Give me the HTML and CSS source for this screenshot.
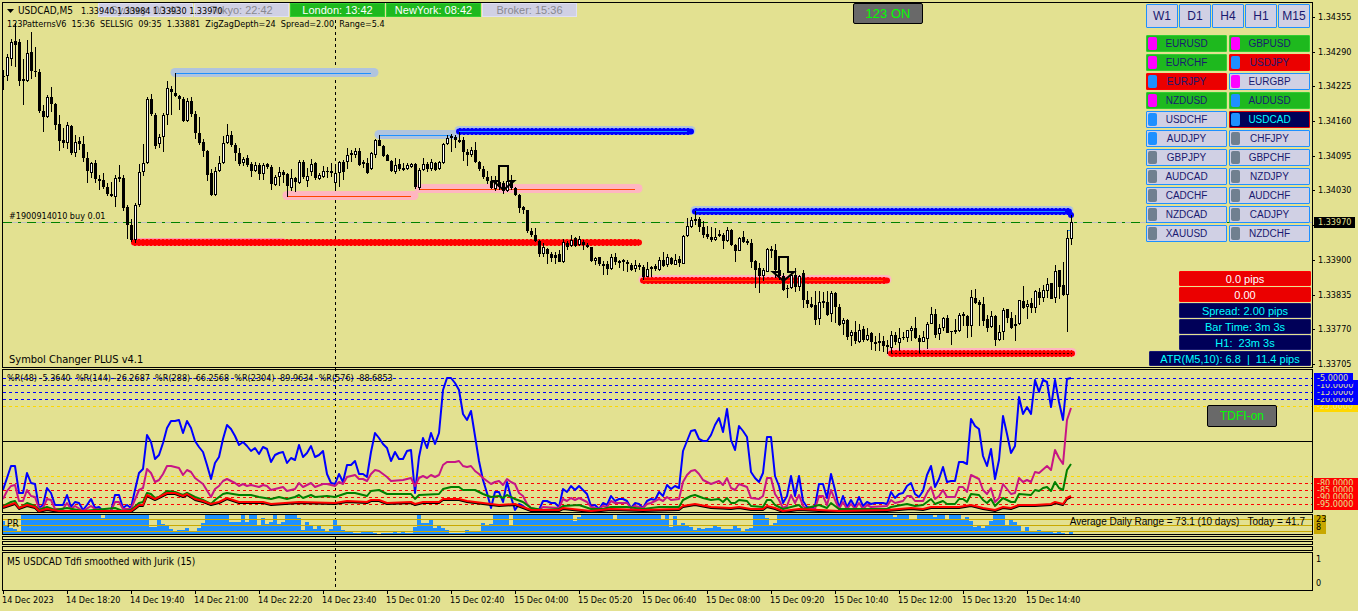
FILE: index.html
```html
<!DOCTYPE html>
<html lang="en">
<head>
<meta charset="utf-8">
<title>USDCAD,M5</title>
<link rel="stylesheet" href="styles.css">
</head>
<body>
<main class="terminal">
  <div class="day-line"></div>

  <section class="pane pane-price">
    <svg class="plot plot-price" id="price"></svg>
    <ul class="sessions">
      <li class="session">Sydney: 00:42</li>
      <li class="session">Tokyo: 22:42</li>
      <li class="session open">London: 13:42</li>
      <li class="session open">NewYork: 08:42</li>
      <li class="session">Broker: 15:36</li>
    </ul>
    <header class="title">
      <svg class="caret" viewBox="0 0 7 4"><path d="M0 0h7L3.500 4z"/></svg>
      <h1 class="symbol">USDCAD,M5</h1>
      <span class="quote">1.33940 1.33984 1.33930 1.33970</span>
    </header>
    <p class="subtitle">123PatternsV6&nbsp; 15:36&nbsp; SELLSIG&nbsp; 09:35&nbsp; 1.33881&nbsp; ZigZagDepth=24&nbsp; Spread=2.00&nbsp; Range=5.4</p>
    <button class="toggle toggle-patterns" type="button">123 ON</button>
    <p class="order">#1900914010 buy 0.01</p>
    <p class="watermark">Symbol Changer PLUS v4.1</p>

    <div class="switcher">
      <div class="frames">
        <button type="button">W1</button><button type="button">D1</button><button type="button">H4</button><button type="button">H1</button><button type="button">M15</button>
      </div>
      <div class="pairs">
        <button type="button" class="pair up"><i class="chip hot"></i>EURUSD</button>
        <button type="button" class="pair up"><i class="chip hot"></i>GBPUSD</button>
        <button type="button" class="pair up"><i class="chip hot"></i>EURCHF</button>
        <button type="button" class="pair down"><i class="chip cool"></i>USDJPY</button>
        <button type="button" class="pair down"><i class="chip cool"></i>EURJPY</button>
        <button type="button" class="pair"><i class="chip hot"></i>EURGBP</button>
        <button type="button" class="pair up"><i class="chip hot"></i>NZDUSD</button>
        <button type="button" class="pair up"><i class="chip cool"></i>AUDUSD</button>
        <button type="button" class="pair"><i class="chip cool"></i>USDCHF</button>
        <button type="button" class="pair current"><i class="chip cool"></i>USDCAD</button>
        <button type="button" class="pair"><i class="chip cool"></i>AUDJPY</button>
        <button type="button" class="pair"><i class="chip"></i>CHFJPY</button>
        <button type="button" class="pair"><i class="chip"></i>GBPJPY</button>
        <button type="button" class="pair"><i class="chip"></i>GBPCHF</button>
        <button type="button" class="pair"><i class="chip"></i>AUDCAD</button>
        <button type="button" class="pair"><i class="chip"></i>NZDJPY</button>
        <button type="button" class="pair"><i class="chip"></i>CADCHF</button>
        <button type="button" class="pair"><i class="chip"></i>AUDCHF</button>
        <button type="button" class="pair"><i class="chip"></i>NZDCAD</button>
        <button type="button" class="pair"><i class="chip"></i>CADJPY</button>
        <button type="button" class="pair"><i class="chip"></i>XAUUSD</button>
        <button type="button" class="pair"><i class="chip"></i>NZDCHF</button>
      </div>
    </div>

    <ul class="stats">
      <li class="stat loss">0.0 pips</li>
      <li class="stat loss">0.00</li>
      <li class="stat">Spread: 2.00 pips</li>
      <li class="stat">Bar Time: 3m 3s</li>
      <li class="stat">H1:&nbsp; 23m 3s</li>
      <li class="stat wide">ATR(M5,10): 6.8&nbsp; |&nbsp; 11.4 pips</li>
    </ul>
  </section>
  <aside class="axis axis-price">
    <ul class="prices">
      <li>1.34355</li><li>1.34290</li><li>1.34225</li><li>1.34160</li><li>1.34095</li><li>1.34030</li>
      <li>1.33965</li><li>1.33900</li><li>1.33835</li><li>1.33770</li><li>1.33705</li>
    </ul>
    <span class="bid">1.33970</span>
  </aside>

  <section class="pane">
    <svg class="plot plot-range" id="range"></svg>
    <p class="legend">%R(48) -5.3640&nbsp; %R(144) -26.2687&nbsp; %R(288) -66.2568&nbsp; %R(2304) -89.9634&nbsp; %R(576) -88.6853</p>
    <button class="toggle toggle-tdfi" type="button">TDFI-on</button>
  </section>
  <aside class="axis axis-range">
    <ul class="levels high">
      <li class="short">-5.0000</li><li>-10.0000</li><li>-15.0000</li><li>-20.0000</li><li class="gold">-25.0000</li>
    </ul>
    <ul class="levels low">
      <li>-80.0000</li><li>-85.0000</li><li>-90.0000</li><li>-95.0000</li>
    </ul>
  </aside>

  <section class="pane">
    <svg class="plot plot-pr" id="pr"></svg>
    <p class="pr-name">PR</p>
    <p class="adr">Average Daily Range = 73.1 (10 days)&nbsp;&nbsp; Today = 41.7</p>
  </section>
  <aside class="axis axis-pr"><span class="pr-scale"><b>23</b><b>8</b></span></aside>

  <div class="slivers"><div class="sliver"></div><div class="sliver"></div><div class="sliver"></div></div>
  <div class="axis"></div>

  <section class="pane pane-tdfi"><p class="tdfi-name">M5 USDCAD Tdfi smoothed with Jurik (15)</p></section>
  <aside class="axis axis-tdfi"><span>1</span><span>0</span></aside>

  <ol class="times">
    <li>14 Dec 2023</li><li>14 Dec 18:20</li><li>14 Dec 19:40</li><li>14 Dec 21:00</li><li>14 Dec 22:20</li><li>14 Dec 23:40</li>
    <li>15 Dec 01:20</li><li>15 Dec 02:40</li><li>15 Dec 04:00</li><li>15 Dec 05:20</li><li>15 Dec 06:40</li><li>15 Dec 08:00</li>
    <li>15 Dec 09:20</li><li>15 Dec 10:40</li><li>15 Dec 12:00</li><li>15 Dec 13:20</li><li>15 Dec 14:40</li>
  </ol>
</main>
<script src="chart.js"></script>
</body>
</html>
```
FILE: styles.css
```css
* { box-sizing: border-box; }
body {
  margin: 0;
  background: #e3e191;
  color: #000;
  font: 9px/11px "DejaVu Sans Condensed", "DejaVu Sans", sans-serif;
}
ul, ol, p, h1 { margin: 0; padding: 0; list-style: none; font-weight: normal; }
button { margin: 0; padding: 0; font-family: "Liberation Sans", Arial, sans-serif; }

.terminal {
  position: relative;
  display: grid;
  grid-template-columns: minmax(0, 1fr) 45px;
  row-gap: 1px;
  padding: 2px 0 0 2px;
  overflow: hidden;
}
.day-line {
  position: absolute;
  left: 335px;
  top: 20px;
  bottom: 21px;
  width: 1px;
  background: repeating-linear-gradient(#000 0 3px, transparent 3px 6px);
}
.pane { position: relative; border: 1px solid #000; }
.plot { display: block; width: 100%; overflow: hidden; }
.plot-price { height: 364px; }
.plot-range { height: 142px; }
.plot-pr { height: 19px; }

/* header */
.sessions { position: absolute; left: 95px; top: 0; display: flex; gap: 1px; }
.session {
  width: 95px;
  height: 14px;
  border: 1px solid #e0e0f4;
  background: #d0d0e4;
  color: #888890;
  font: 11px/12px "Liberation Sans", Arial, sans-serif;
  text-align: center;
}
.session.open { background: #1eb91e; border-color: #32cd32; color: #fff; }
.title { position: absolute; left: 4px; top: 2px; display: flex; align-items: center; gap: 4px; }
.caret { width: 7px; height: 4px; }
.symbol { font-size: 10px; line-height: 12px; width: 59px; }
.quote { font-size: 9px; line-height: 12px; }
.subtitle { position: absolute; left: 4px; top: 15px; line-height: 12px; white-space: nowrap; }
.order { position: absolute; left: 6px; top: 208px; }
.watermark { position: absolute; left: 6px; bottom: 1px; font-size: 11px; line-height: 13px; }

.toggle {
  position: absolute;
  width: 70px;
  height: 21px;
  border: 1px solid #000;
  border-radius: 2px;
  background: #696969;
  color: #0f0;
  font-size: 12px;
}
.toggle-patterns { left: 850px; top: 0; font-size: 13px; }
.toggle-tdfi { right: 35px; top: 35px; height: 22px; }

/* symbol switcher */
.switcher { position: absolute; right: 2px; top: 1px; width: 164px; display: grid; gap: 7px; }
.frames { display: grid; grid-template-columns: repeat(5, 1fr); gap: 1px; }
.frames button {
  height: 24px;
  border: 1px solid #1e90ff;
  border-radius: 1px;
  background: #d0d0e4;
  color: #191970;
  font-size: 12px;
}
.pairs { display: grid; grid-template-columns: 1fr 1fr; gap: 2px; }
.pair {
  position: relative;
  height: 17px;
  border: 1px solid #1e90ff;
  border-radius: 1px;
  background: #d0d0e4;
  color: #191970;
  font-size: 10px;
}
.pair.up { background: #1eb91e; border-color: #32cd32; }
.pair.down { background: #eb0000; border-color: #f00; }
.pair.current { background: #000058; border-color: #d00; color: #0ff; }
.chip {
  position: absolute;
  left: 1px;
  top: 1px;
  width: 9px;
  height: 13px;
  border-radius: 2px;
  background: #708090;
}
.chip.hot { background: #f0f; }
.chip.cool { background: #1e90ff; }

.stats { position: absolute; right: 1px; bottom: 1px; display: grid; gap: 1px; justify-items: end; }
.stat {
  width: 132px;
  height: 15px;
  border: 1px solid #191970;
  border-radius: 1px;
  background: #000058;
  color: #0ff;
  font: 11px/14px "Liberation Sans", Arial, sans-serif;
  text-align: center;
}
.stat.loss { background: #eb0000; border-color: #f00; color: #fff; }
.stat.wide { width: 162px; }

/* lower panes */
.legend { position: absolute; left: 4px; top: 3px; white-space: nowrap; }
.pr-name { position: absolute; left: 4px; top: 3px; font-size: 10px; }
.adr {
  position: absolute;
  right: 7px;
  top: 1px;
  font: 10px/12px "Liberation Sans", Arial, sans-serif;
}
.slivers { display: grid; gap: 1px; }
.sliver { height: 4px; border: 1px solid #000; }
.sliver:last-child { height: 5px; }
.pane-tdfi { height: 39px; padding: 3px 4px; }
.tdfi-name { font-size: 10px; }

/* scales */
.axis { position: relative; }
.axis-price { height: 366px; }
.prices { display: grid; gap: 1px; padding-top: 10px; height: 368px; align-content: space-between; }
.prices li { display: flex; align-items: center; gap: 3px; }
.prices li::before { content: ""; width: 2px; height: 1px; background: #000; }
.bid {
  position: absolute;
  left: 1px;
  top: 215px;
  width: 41px;
  padding-left: 4px;
  background: #000;
  color: #e3e191;
}
.axis-range { display: flex; flex-direction: column; justify-content: space-between; padding: 4px 0 3px 1px; }
.levels { display: flex; flex-direction: column; }
.levels li {
  position: relative;
  width: 44px;
  height: 11px;
  margin-bottom: -4px;
  padding-left: 3px;
  background: #00f;
  color: #e3e191;
}
.levels li:last-child { margin-bottom: 0; }
.levels .short { width: 39px; z-index: 4; }
.high li:nth-child(2) { z-index: 3; }
.high li:nth-child(3) { z-index: 2; }
.high li:nth-child(4) { z-index: 1; }
.levels .gold { background: #ffd700; }
.low li { background: #f00; }
.axis-pr { padding: 1px; }
.pr-scale {
  display: flex;
  flex-direction: column;
  width: 12px;
  height: 19px;
  padding-left: 2px;
  background: #c8a800;
  line-height: 8px;
}
.pr-scale b { font-weight: normal; }
.axis-tdfi { display: flex; flex-direction: column; justify-content: space-between; padding: 2px 3px; }

.times { grid-column: 1 / -1; display: flex; margin-top: -1px; height: 20px; }
.times li { position: relative; flex: 0 0 64px; padding-top: 4px; white-space: nowrap; }
.times li::before { content: ""; position: absolute; left: 1px; top: 0; width: 1px; height: 3px; background: #000; }
```
FILE: chart.js
```js
const NS = 'http://www.w3.org/2000/svg';
const STEP = 4;
const X0 = 3;

// Each bar: high, body top, body bottom, low; a leading "w" marks a rising bar.
const bars = `70,76,77,90 w54,57,76,81 w39,42,59,66 23,41,45,67 39,42,81,86 59,79,81,105 w40,53,81,82 32,52,71,79 47,71,72,77 69,72,111,113
105,111,117,132 w95,97,117,118 87,97,104,112 103,104,125,130 115,124,141,151 128,140,143,148 w122,125,143,149 125,126,153,155 w135,142,153,157 137,141,144,150
136,144,158,162 152,158,171,183 w162,163,173,178 160,163,179,183 175,179,181,190 173,180,187,189 183,187,194,196 182,194,196,197 w175,178,197,207 165,177,179,182
175,178,208,211 205,207,225,239 219,225,240,242 w203,205,240,243 w164,172,205,207 w144,163,172,176 w97,99,163,164 94,99,114,116 113,115,146,149 w134,137,144,148
w113,115,137,152 w81,88,115,125 86,89,92,115 73,93,96,97 95,96,99,110 97,99,121,122 w98,101,121,122 97,101,114,117 111,114,133,139 117,133,143,145
139,142,151,157 150,151,175,181 169,173,195,196 w167,171,195,196 w156,163,171,172 w136,143,163,164 w124,135,143,144 131,135,145,147 143,145,153,161 148,153,164,166
w157,159,163,166 155,158,165,167 162,164,171,177 w162,165,171,172 163,165,174,180 w163,165,174,180 163,164,167,169 165,167,184,190 w175,177,185,186 w167,172,177,186
170,172,175,183 173,174,186,197 w169,178,188,191 177,178,182,192 w160,162,183,184 160,162,177,179 w168,176,181,187 w159,164,172,176 162,163,178,180 w173,175,179,180
w166,171,177,178 167,171,172,178 163,171,173,177 w164,173,183,191 w161,162,173,187 160,162,172,180 w148,155,162,169 150,153,155,162 w148,151,155,158 148,151,165,166
160,162,164,168 158,163,173,174 w152,153,169,170 w139,140,155,158 135,140,146,146 145,146,156,157 154,155,161,161 160,161,171,172 w158,165,172,174 159,164,169,171
w163,168,170,171 w163,165,169,170 w163,164,167,168 163,164,187,189 w168,170,188,190 w158,164,170,171 162,164,169,172 w159,162,169,171 162,163,170,171 w161,162,169,170
w143,144,163,164 w135,138,144,145 134,136,138,152 135,137,140,148 132,140,142,143 137,140,152,161 149,152,155,166 w147,150,155,157 142,150,162,163 161,162,169,171
166,169,177,179 171,177,181,184 176,181,188,189 w176,182,189,191 181,182,187,190 181,183,191,194 w178,181,191,192 175,180,188,190 187,188,195,196 194,195,208,213
206,207,210,214 210,210,231,233 228,231,235,237 228,235,241,242 240,241,254,257 w243,247,254,257 248,249,254,264 252,254,258,262 252,255,258,264 250,254,262,262
w239,242,262,263 241,243,247,250 w235,240,246,247 237,238,246,247 w236,239,245,246 240,242,245,250 243,245,247,248 247,247,261,262 w257,258,261,265 257,257,264,266
261,264,266,275 261,264,269,275 w254,257,269,270 253,257,262,265 260,261,263,268 259,260,262,271 260,262,264,272 263,265,270,271 w260,265,269,272 263,265,267,270
265,267,277,280 w262,269,277,277 266,267,269,277 264,266,269,271 w257,260,270,271 252,260,266,267 w254,257,265,267 257,258,264,265 w254,260,265,265 256,259,263,267
w235,236,264,264 w218,226,236,237 w217,220,227,228 211,219,221,225 217,219,227,232 221,227,235,238 226,234,237,239 227,237,240,242 w228,237,240,241 w230,234,236,237
233,235,241,249 w227,230,241,242 229,230,245,246 244,245,251,262 w237,238,251,251 231,237,242,243 239,241,243,245 239,243,262,268 260,261,270,288 263,268,276,293
w268,270,276,281 w248,249,272,272 246,249,251,258 244,250,270,278 268,270,276,280 273,276,290,291 285,288,289,298 w273,275,288,289 268,275,287,292 w275,276,287,291
270,273,300,308 291,300,304,308 297,304,307,308 291,305,320,325 w291,302,319,325 292,301,303,308 291,302,315,316 w291,293,314,322 292,293,307,323 304,307,325,326
w318,320,324,335 319,320,337,340 w330,332,336,346 321,332,341,344 w324,330,342,343 326,329,340,342 w328,335,340,341 332,333,342,350 336,342,344,351 333,341,343,351
336,341,346,352 340,345,347,354 w331,335,348,353 332,335,342,345 w328,338,343,351 332,337,338,340 w330,330,338,342 w326,328,331,341 317,328,338,339 335,338,342,353
w331,337,342,342 w322,324,339,349 w307,314,324,324 309,314,335,338 w324,328,334,340 w317,318,328,331 315,318,333,333 331,331,332,345 319,330,332,334 w313,315,331,332
312,314,316,326 315,316,326,338 w290,297,326,337 289,298,303,304 300,302,305,326 297,304,321,326 315,319,328,332 w311,316,327,328 315,316,340,346 w325,332,340,341
w308,310,332,340 309,309,318,323 312,318,328,329 315,324,326,341 w300,300,324,325 286,301,308,309 w300,304,307,319 298,303,308,313 w290,291,308,313 288,292,298,305
w285,290,298,302 w278,284,291,298 283,283,299,299 w265,271,298,303 270,270,287,299 262,285,295,296 w230,238,295,332 w215,222,239,245`.split(/\s+/);

// Fast line, one value per bar.
const fast = `490 478 466 466 493 493 473 483 484 508 505 488 493 505 505 505 495 507 502 503 510 505 499 508 507 511 511 511 495 495
508 505 508 490 473 469 435 442 459 455 443 428 421 421 420 433 421 428 441 447 452 465 479 463 457 439 425 429 436 445 442 446 451 448 454 447 449
462 455 453 452 463 458 460 445 457 453 446 457 455 451 474 483 484 474 482 465 465 461 474 474 477 452 433 438 444 448 461 452 459 459 451 450 493
457 438 448 433 444 433 390 378 378 383 390 414 420 411 436 461 480 493 508 492 492 502 482 497 510 504 506 509 510 511 510 501 501 503 503 507 489
492 486 490 486 490 494 506 505 509 503 505 496 501 499 499 501 508 503 504 508 501 499 500 492 496 485 489 486 488 451 441 431 430 439 441 441 435
425 418 432 409 440 450 426 431 437 472 478 482 473 437 437 476 486 503 496 476 496 476 501 507 508 506 484 484 498 474 490 508 496 507 500 507 497
506 502 504 503 503 503 504 492 498 494 493 486 483 494 497 491 475 466 487 479 467 482 481 481 462 462 464 419 426 429 456 466 449 479 460 416 434
453 446 397 414 407 414 380 392 380 382 407 380 402 420 379 378`.split(/\s+/).map((y, i) => [X0 + i * STEP, +y]);

// Slower lines, as x,y pairs at the turning points.
const pairs = s => s.trim().split(/\s+/).map(p => p.split(',').map(Number));
const medium = pairs(`3,499 7,491 11,486 15,485 19,501 23,501 27,490 31,496 35,497 39,509 43,508 47,499 51,500 55,509 63,509 67,503 71,509 75,506 83,511 91,506 95,509
111,511 115,502 119,502 123,509 131,509 139,490 143,488 147,469 151,473 155,482 159,480 163,474 167,466 171,466 179,468 183,475 187,470 191,472 195,478 203,484 211,497
215,489 219,486 223,481 227,479 235,483 239,486 243,484 247,486 251,485 259,487 263,485 267,486 271,490 283,487 287,491 295,489 299,483 303,487 311,483 315,487 323,484
327,484 335,486 339,482 343,484 347,477 355,475 359,479 363,479 367,481 371,474 375,470 379,471 387,477 391,481 403,480 411,478 415,486 419,478 423,476 427,478 431,475
435,477 439,475 443,465 447,462 455,462 459,461 463,466 467,467 471,466 475,471 479,474 483,478 491,484 495,482 499,481 503,485 507,479 511,482 515,484 519,493 523,496
527,504 531,508 539,510 543,507 559,508 563,499 567,501 571,498 575,500 579,498 587,502 591,507 599,509 603,506 607,507 611,501 615,503 627,503 631,508 635,506 643,508
647,504 651,503 659,499 663,501 667,497 671,500 679,499 683,482 687,475 691,471 695,470 699,474 703,480 707,482 711,484 719,481 723,485 727,478 731,488 735,490 739,484
747,487 751,498 759,499 763,496 767,478 771,478 775,494 779,500 783,508 787,506 791,495 795,503 799,495 803,506 807,509 815,509 819,496 823,496 827,505 831,490 835,500
839,509 843,502 847,509 851,504 855,509 859,503 863,509 867,505 871,507 887,506 891,500 895,503 903,501 907,496 911,496 915,501 923,501 927,493 931,487 935,499 939,496
943,490 947,497 955,497 959,487 963,487 967,492 971,475 979,479 983,490 987,494 991,488 995,502 999,498 1003,484 1007,489 1011,494 1015,493 1019,478 1023,482 1027,480
1031,482 1035,472 1039,473 1047,466 1051,470 1055,450 1059,458 1063,464 1067,420 1071,408`);
const slow = pairs(`3,506 11,502 15,501 19,508 27,503 35,506 39,510 47,507 55,510 67,508 83,511 115,508 123,511 131,510 139,503 143,502 147,493 151,494 155,498 159,497
167,491 175,492 183,495 187,493 195,497 203,500 211,504 215,500 223,494 227,493 239,495 251,495 259,497 271,499 279,497 287,499 295,497 299,495 303,498 311,495 315,497
327,496 335,497 347,493 355,493 367,496 371,491 379,490 387,494 411,494 415,499 419,495 439,494 443,489 451,487 459,487 463,490 475,490 483,494 491,497 499,496 503,498
507,495 515,499 523,502 531,508 543,510 559,509 563,506 579,505 591,509 603,509 611,507 627,507 643,509 659,507 679,507 683,500 691,496 695,495 703,498 711,500 719,499
723,502 727,498 731,503 735,503 739,500 747,501 751,506 763,507 767,500 771,500 775,505 783,509 791,507 799,505 803,509 819,505 827,508 831,503 839,509 887,509 891,507
907,504 915,506 923,505 931,499 935,504 943,501 947,504 955,504 959,499 963,499 967,502 971,494 979,495 983,500 987,503 991,499 995,506 1003,498 1011,502 1015,502
1019,494 1031,495 1035,490 1039,491 1043,488 1047,487 1051,491 1055,482 1059,488 1063,490 1067,470 1071,464`);
const slowest = pairs(`3,507 15,503 19,508 27,505 35,507 39,511 47,509 59,511 131,511 139,505 143,505 147,495 155,499 167,493 175,493 183,496 187,494 195,499 203,501
211,504 219,502 227,498 239,502 263,502 271,504 299,502 335,503 347,501 367,502 371,500 379,500 387,503 411,502 415,504 423,502 439,502 443,499 459,499 467,501 483,503
499,505 515,504 523,507 531,510 559,510 563,508 591,511 611,509 643,510 679,509 683,506 695,504 711,507 731,508 739,507 751,509 763,509 767,506 775,508 783,511 799,509
839,511 887,510 911,508 923,509 931,507 959,507 971,505 983,508 995,510 1003,507 1011,508 1019,505 1035,505 1051,504 1055,502 1063,504 1067,498 1071,496`);

// Histogram tops; "515*20" repeats a value.
const tops = `521 526 528 529 531 515*20 518 515*11 527 527 520 524 526 529 531 530 530 528 531 531 528 523 515*6 522*3 515 522 515 515 525 518 524 522 515 524 522
515*3 518 530 522 526 529 526 529 531 529 520 526 530 531 532 533 533 532*3 533 534 533*3 532 533 532 533 533 527 515 523 523 520 528 526 528 530 533*4 530 532*3
523 525 524 515*4 525 515*15 521 517 515*8 519 515*11 520 515 527 516 525 523 526 527 530 528 529 528 528 526 527 529*3 526 528 531 529 528 515*3 518 525 523
515*29 517 515*3 520 520 515*4 517 515 515 520 515*3 519 517 521 527 526 528 526 521 515*3 526 520 522 525 531 527 532 531 530 531 532 532 533 532 533 534 532`
  .split(/\s+/).flatMap(t => { const [v, n = 1] = t.split('*').map(Number); return Array(n).fill(v); });

function add(parent, name, attrs) {
  const el = document.createElementNS(NS, name);
  for (const k in attrs) el.setAttribute(k, attrs[k]);
  parent.appendChild(el);
  return el;
}
function layer(id, top) {
  return add(document.getElementById(id), 'g', { transform: `translate(-3 ${-top})` });
}
function rule(g, y, color, dash, x1 = 3, x2 = '110%') {
  return add(g, 'line', { x1, x2, y1: y + 0.5, y2: y + 0.5, stroke: color, 'stroke-dasharray': dash || 'none' });
}
function band(g, x1, x2, y, color, width) {
  add(g, 'line', { x1, x2, y1: y, y2: y, stroke: color, 'stroke-width': width, 'stroke-linecap': 'round' });
}
function trace(g, points, color, dy = 0) {
  add(g, 'polyline', {
    points: points.map(([x, y]) => `${x},${y + dy}`).join(' '),
    fill: 'none', stroke: color, 'stroke-width': 2, 'stroke-linejoin': 'round'
  });
}
function strong(g, x1, x2, y, color, halo, core) {
  band(g, x1 + 3, x2 - 3, y - 0.5, halo, 9);
  band(g, x1 + 3, x2 - 3, y + 0.5, color, 6);
  add(g, 'line', { x1: x1 + 3, x2: x2 - 3, y1: y + 0.5, y2: y + 0.5, stroke: color, 'stroke-width': 7, 'stroke-dasharray': '2 2' });
  if (core) rule(g, y, core, '', x1 + 3, x2 - 7);
}

// Price pane
const price = layer('price', 3);
rule(price, 222, '#c0c0c0');
rule(price, 222, '#008000', '9 6 3 6');
band(price, 175, 374, 72.5, '#b0c4de', 9);
rule(price, 73, '#1e90ff', '', 175, 371);
band(price, 379, 455, 134.5, '#b0c4de', 9);
rule(price, 135, '#1e90ff', '', 379, 452);
band(price, 287, 414, 195.5, '#ffb6c1', 9);
rule(price, 196, '#ff4500', '', 287, 411);
band(price, 419, 638, 188.5, '#ffb6c1', 9);
rule(price, 189, '#ff4500', '', 419, 635);
strong(price, 456, 694, 131, '#0000ff', '#b0c4de', '#1e90ff');
strong(price, 692, 1072, 211, '#0000ff', '#b0c4de', '#1e90ff');
band(price, 135, 282, 242, '#ff9fae', 8);
strong(price, 131, 642, 242, '#ff0000', 'none');
strong(price, 640, 890, 280, '#ff0000', '#ffb6c1', '#ff4500');
strong(price, 888, 1075, 353, '#ff0000', '#ffb6c1');
rule(price, 353, '#300000', '2 2', 891, 1072);
add(price, 'circle', { cx: 1071, cy: 215, r: 3, fill: '#0000ff' });
rule(price, 230, '#1e90ff', '', 1068, 1071);

const bodies = add(price, 'g', { 'shape-rendering': 'crispEdges' });
bars.forEach((bar, i) => {
  const rising = bar[0] === 'w';
  const [high, top, bottom, low] = bar.replace('w', '').split(',').map(Number);
  const x = X0 + i * STEP;
  const height = Math.max(1, bottom - top);
  add(bodies, 'rect', { x, y: high, width: 1, height: low - high });
  add(bodies, 'rect', { x: x - 1, y: top, width: 3, height });
  if (rising && height > 2) add(bodies, 'rect', { x, y: top + 1, width: 1, height: height - 2, fill: '#fff' });
});
[[503, 166], [783, 257]].forEach(([x, y]) => add(price, 'path', {
  d: `M${x - 4} ${y}h9v15h6l-10.500 9l-10.500 -9h6z`, fill: 'none', stroke: '#000', 'stroke-width': 2
}));

// Percent range pane
const range = layer('range', 370);
[378, 385, 392, 399].forEach(y => rule(range, y, '#0000ff', '3 3'));
[406, 476].forEach(y => rule(range, y, '#ffd700', '3 3'));
[483, 490, 497, 504].forEach(y => rule(range, y, '#ff0000', '3 3'));
rule(range, 441, '#000');
trace(range, fast, '#0000ff');
trace(range, medium, '#c71585');
trace(range, slow, '#008000');
trace(range, slowest, '#000', 1);
trace(range, slowest, '#ff0000');

// Histogram pane
const pr = layer('pr', 515);
tops.forEach((y, i) => add(pr, 'rect', {
  x: X0 - 2 + i * STEP, y, width: STEP, height: 534 - y, fill: '#1e90ff', 'shape-rendering': 'crispEdges'
}));
[519, 525, 531].forEach(y => rule(pr, y, '#c8a800'));
```
